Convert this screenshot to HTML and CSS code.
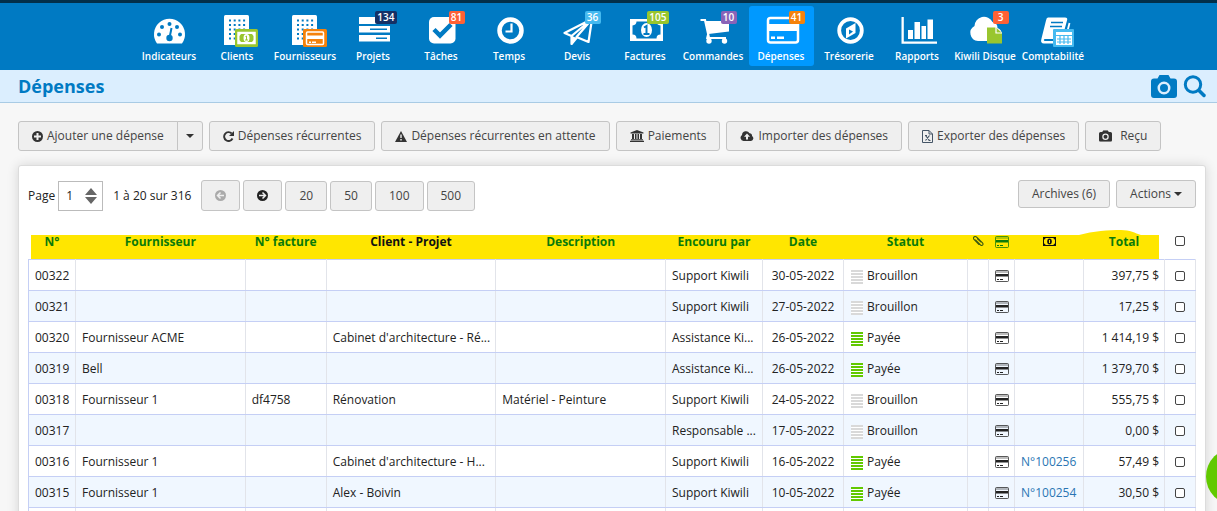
FILE: index.html
```html
<!DOCTYPE html>
<html lang="fr">
<head>
<meta charset="utf-8">
<title>Dépenses</title>
<link rel="stylesheet" href="styles.css">
</head>
<body>
<svg class="defs" aria-hidden="true">
  <symbol id="building" viewBox="0 0 40 34">
    <path fill="#fff" d="M8.500 1h22a1.500 1.500 0 0 1 1.500 1.500V31H7V2.500A1.500 1.500 0 0 1 8.500 1z"/>
    <path stroke="#007ac3" stroke-width="2" stroke-dasharray="2 2.700" fill="none" d="M12 6.500h17M12 11h17M12 15.500h17M12 20h17M12 24.500h17"/>
  </symbol>
  <symbol id="card" viewBox="0 0 14 12">
    <rect x=".5" y=".5" width="13" height="11" rx="1" fill="none" stroke="currentColor" opacity=".75"/>
    <path fill="currentColor" opacity=".3" d="M1 1h12v2H1z"/>
    <path fill="currentColor" d="M1 4h12v2.500H1zM2 9h2v1H2zM5 9h3v1H5z"/>
  </symbol>
  <symbol id="camera" viewBox="0 0 26 23">
    <path fill="currentColor" fill-rule="evenodd" d="M8.500 0h9l2 3.500H23a3 3 0 0 1 3 3V20a3 3 0 0 1-3 3H3a3 3 0 0 1-3-3V6.500a3 3 0 0 1 3-3h3.500zM13 6.500a6.500 6.500 0 1 0 0 13 6.500 6.500 0 0 0 0-13zm0 2.500a4 4 0 1 1 0 8 4 4 0 0 1 0-8z"/>
  </symbol>
</svg>

<nav class="nav">
  <a class="nav-item" href="#"><svg class="nav-icon" viewBox="0 0 40 34"><path fill="#fff" d="M8 29.500A15.500 15.500 0 1 1 33 29.500z"/><g fill="#007ac3"><circle cx="10" cy="20.500" r="2"/><circle cx="13" cy="13" r="2"/><circle cx="20.500" cy="10" r="2"/><circle cx="28" cy="13" r="2"/><circle cx="31" cy="20.500" r="2"/><circle cx="20.500" cy="24" r="3.200"/></g><path stroke="#007ac3" stroke-width="2" d="M20.500 24l2-10"/></svg><span>Indicateurs</span></a>
  <a class="nav-item" href="#"><svg class="nav-icon" viewBox="0 0 40 34"><use href="#building" width="40" height="34"/><rect x="18" y="15" width="23" height="18" rx="1.500" fill="#99c62e"/><path fill="none" stroke="#fff" stroke-width="1.500" d="M21 18.500h17v11H21z"/><path fill="#fff" fill-rule="evenodd" d="M21 18.500h17v11H21zm3 1.500l-1.500 2v4l1.500 2h11l1.500-2v-4l-1.500-2z"/><ellipse cx="29.500" cy="24" rx="3" ry="4" fill="#fff"/><path stroke="#99c62e" d="M28.500 22.500l1-.5v4m-1.500 0h3" fill="none"/></svg><span>Clients</span></a>
  <a class="nav-item" href="#"><svg class="nav-icon" viewBox="0 0 40 34"><use href="#building" width="40" height="34"/><rect x="18" y="15" width="24" height="18" rx="1.500" fill="#f5820b"/><rect x="21.500" y="18" width="17" height="12.500" rx="1" fill="none" stroke="#fff" stroke-width="1.500"/><path fill="#fff" d="M22 21.500h16V25H22zM24 27.500h2V29h-2zM27 27.500h4V29h-4z"/></svg><span>Fournisseurs</span></a>
  <a class="nav-item" href="#"><svg class="nav-icon" viewBox="0 0 40 34"><path fill="#fff" d="M6 3h31v7H6zM6 12h31v6.500H6zM6 21h31v6.500H6z"/><path stroke="#007ac3" stroke-width="1.500" d="M17 15.300h17M23 24.200h11"/></svg><b class="badge navy">134</b><span>Projets</span></a>
  <a class="nav-item" href="#"><svg class="nav-icon" viewBox="0 0 40 34"><rect x="8" y="3" width="26.500" height="26.500" rx="5" fill="#fff"/><path fill="none" stroke="#007ac3" stroke-width="4.500" d="M13 15.500l6 6L30 10.500"/></svg><b class="badge red">81</b><span>Tâches</span></a>
  <a class="nav-item" href="#"><svg class="nav-icon" viewBox="0 0 40 34"><circle cx="21.500" cy="16.500" r="11" fill="none" stroke="#fff" stroke-width="4.500"/><path fill="none" stroke="#fff" stroke-width="2.200" d="M22.500 9.500v8h-6"/></svg><span>Temps</span></a>
  <a class="nav-item" href="#"><svg class="nav-icon" viewBox="0 0 40 34"><path fill="none" stroke="#fff" stroke-width="2.200" stroke-linejoin="round" d="M35 5L7.500 19l7 3zM35 5L14.500 22v8l5-6M35 5l-3.500 23-12-5z"/><path fill="#fff" d="M14 21.500l5.500 2.500-4.500 7z"/></svg><b class="badge sky">36</b><span>Devis</span></a>
  <a class="nav-item" href="#"><svg class="nav-icon" viewBox="0 0 40 34"><path fill="#fff" fill-rule="evenodd" d="M5 5h33v22H5zm6.500 2.500q0 3.500-4 4v9q4 0 4 4h20q0-4 4-4v-9q-4-.5-4-4z"/><ellipse cx="21.500" cy="16" rx="5.500" ry="7" fill="#fff"/><path fill="none" stroke="#007ac3" stroke-width="2" d="M19 13.500l2.500-1.500v8M18.500 20h6"/></svg><b class="badge lime">105</b><span>Factures</span></a>
  <a class="nav-item" href="#"><svg class="nav-icon" viewBox="0 0 40 34"><path fill="#fff" d="M12 7h24v10.500L15.500 20z"/><path fill="none" stroke="#fff" stroke-width="2.200" d="M7.500 6h4.500l4 18h17M15 21l-1 4"/><circle cx="16" cy="27" r="2.700" fill="#fff"/><circle cx="31.500" cy="27" r="2.700" fill="#fff"/></svg><b class="badge purple">10</b><span>Commandes</span></a>
  <a class="nav-item active" href="#" aria-current="page"><svg class="nav-icon" viewBox="0 0 40 34"><rect x="7" y="4" width="30" height="24.500" rx="2.500" fill="none" stroke="#fff" stroke-width="2.500"/><path fill="#fff" d="M7 10h30v7H7zM10 22.500h4V25h-4zM16 22.500h7V25h-7z"/></svg><b class="badge orange">41</b><span>Dépenses</span></a>
  <a class="nav-item" href="#"><svg class="nav-icon" viewBox="0 0 40 34"><circle cx="21.500" cy="16.500" r="11.300" fill="none" stroke="#fff" stroke-width="3.800"/><path fill="#fff" fill-rule="evenodd" d="M26.500 9v10l-9.500 5.500V14.500zM20 15.500v5l4-3z"/></svg><span>Trésorerie</span></a>
  <a class="nav-item" href="#"><svg class="nav-icon" viewBox="0 0 40 34"><path fill="#fff" d="M4.500 3h2.300v24.500H40v2.300H4.500zM11 16h5v9h-5zM17.500 8H23v17h-5.500zM24.500 12H29v13h-4.500zM30.500 5.500H36V25h-5.500z"/></svg><span>Rapports</span></a>
  <a class="nav-item" href="#"><svg class="nav-icon" viewBox="0 0 40 34"><path fill="#fff" d="M13 27a8 8 0 0 1-3.500-15A9.500 9.500 0 0 1 27.500 8a6 6 0 0 1 5 6 7 7 0 0 1 0 13z"/><path fill="#99c62e" d="M22 13.500h9l6 5.500v10.500H22z"/><path fill="none" stroke="#fff" stroke-width="1.200" d="M31 13v6h6"/></svg><b class="badge red">3</b><span>Kiwili Disque</span></a>
  <a class="nav-item" href="#"><svg class="nav-icon" viewBox="0 0 40 34"><path fill="#fff" d="M15 3.500h17q3 0 2 3L29 25H11.500q-1.500 1 0 2H21v2.500H11q-4 0-2.500-5l4.500-18q.5-3 2-3z"/><path fill="none" stroke="#fff" stroke-width="1.800" d="M36.500 9l-3 12"/><path stroke="#007ac3" stroke-width="1.500" d="M18 8.500h12M17 12.500h12"/><rect x="20" y="15" width="21" height="18" rx="1" fill="#45baf0"/><path fill="#fff" d="M23 18h16v13H23z"/><path stroke="#45baf0" stroke-width="1.200" d="M23 21.500h16M24 25h14M24 28h14M27 22v8M31 22v8M35 22v8"/></svg><span>Comptabilité</span></a>
</nav>

<header class="titlebar">
  <h1>Dépenses</h1>
  <div class="title-actions">
    <button class="bare" aria-label="Reçu"><svg width="26" height="23"><use href="#camera"/></svg></button>
    <button class="bare" aria-label="Rechercher"><svg width="24" height="23" viewBox="0 0 24 23"><circle cx="10" cy="9.500" r="7.700" fill="none" stroke="currentColor" stroke-width="3"/><path stroke="currentColor" stroke-width="3.500" stroke-linecap="round" d="M16 15.500l5 5"/></svg></button>
  </div>
</header>

<div class="toolbar">
  <div class="split">
    <button class="btn"><svg width="11" height="11" viewBox="0 0 11 11"><circle cx="5.500" cy="5.500" r="5.500" fill="#333"/><path stroke="#efefef" stroke-width="2" d="M2 5.500h7M5.500 2v7"/></svg>Ajouter une dépense</button>
    <button class="btn toggle" aria-label="Plus d'options"><svg width="8" height="4" viewBox="0 0 8 4"><path fill="#333" d="M0 0h8L4 4z"/></svg></button>
  </div>
  <button class="btn"><svg width="11" height="11" viewBox="0 0 11 11"><path fill="none" stroke="#333" stroke-width="1.900" d="M9.500 7.500A4.400 4.400 0 1 1 8.700 2.500"/><path fill="#333" d="M11 0v5H6z"/></svg>Dépenses récurrentes</button>
  <button class="btn"><svg width="12" height="11" viewBox="0 0 12 11"><path fill="#333" d="M6 0l6 11H0z"/><path stroke="#efefef" stroke-width="1.400" d="M6 3.500v3.500M6 8v1.500"/></svg>Dépenses récurrentes en attente</button>
  <button class="btn"><svg width="14" height="12" viewBox="0 0 14 12"><path fill="#333" d="M7 0l6.500 2.500v1H.5v-1zM2 4h2v5H2zM5 4h1.500v5H5zM7.500 4H9v5H7.500zM10 4h2v5h-2zM1 9.300h12v.9H1zM0 10.800h14V12H0z"/></svg>Paiements</button>
  <button class="btn"><svg width="14" height="10" viewBox="0 0 14 10"><path fill="#333" d="M3.500 10A3.300 3.300 0 0 1 2 4 4 4 0 0 1 9.500 2.300 2.300 2.300 0 0 1 12 5a2.700 2.700 0 0 1-1 5z"/><path fill="#efefef" d="M7 2.500l3 3.200H8v2.800H6V5.700H4z"/></svg>Importer des dépenses</button>
  <button class="btn"><svg width="11" height="13" viewBox="0 0 11 13"><path fill="none" stroke="#456" d="M.5.500h6.500l3.500 3.500v8.500H.5zM7 .5V4h3.500"/><path stroke="#456" stroke-width="1.200" d="M3.500 5.500l4 5M7.500 5.500l-4 5M3 5.500h2M6.500 10.500h2"/></svg>Exporter des dépenses</button>
  <button class="btn wide"><svg width="13" height="12" viewBox="0 0 26 23"><use href="#camera"/></svg>Reçu</button>
</div>

<main class="panel">
  <div class="pager">
    <label for="page">Page</label>
    <div class="page-box"><input id="page" type="text" value="1"><svg width="12" height="16" viewBox="0 0 12 16"><path fill="#666" d="M6 0l6 7H0zM6 16l6-7H0z"/></svg></div>
    <span class="range">1 à 20 sur 316</span>
    <button class="btn arrow" disabled aria-label="Page précédente"><svg width="11" height="11" viewBox="0 0 11 11"><circle cx="5.500" cy="5.500" r="5.500" fill="#aaa"/><path fill="none" stroke="#efefef" stroke-width="1.500" d="M9 5.500H3M5.500 2.500l-3 3 3 3"/></svg></button>
    <button class="btn arrow" aria-label="Page suivante"><svg width="11" height="11" viewBox="0 0 11 11"><circle cx="5.500" cy="5.500" r="5.500" fill="#222"/><path fill="none" stroke="#efefef" stroke-width="1.500" d="M2 5.500h6M5.500 2.500l3 3-3 3"/></svg></button>
    <button class="btn">20</button>
    <button class="btn">50</button>
    <button class="btn">100</button>
    <button class="btn">500</button>
    <div class="right">
      <button class="btn">Archives (6)</button>
      <button class="btn menu">Actions<svg width="8" height="4" viewBox="0 0 8 4"><path fill="#333" d="M0 0h8L4 4z"/></svg></button>
    </div>
  </div>

  <div class="table-wrap">
    <div class="marker"><svg width="62" height="5" viewBox="0 0 62 5"><path fill="#ffe600" d="M0 5C14 1 30 0 42 0c9 0 14 3 20 5z"/></svg></div>
    <table>
      <colgroup><col class="c-num"><col><col class="c-fac"><col><col><col class="c-par"><col class="c-date"><col class="c-stat"><col class="c-clip"><col class="c-card"><col class="c-bill"><col class="c-total"><col class="c-check"></colgroup>
      <thead>
        <tr>
          <th>N°</th><th>Fournisseur</th><th>N° facture</th><th class="plain">Client - Projet</th><th>Description</th><th>Encouru par</th><th>Date</th><th>Statut</th>
          <th><svg width="11" height="11" viewBox="0 0 11 11"><path fill="none" stroke="#3b5a10" stroke-width="1.100" stroke-linecap="round" d="M2.500 4l5 5q1.500 1 2.200 0t-.2-2.200L3.500 1Q2 0 1 1t0 2.500L6 8.500M8 6L4.500 2.800"/></svg></th>
          <th><svg width="14" height="12"><use href="#card"/></svg></th>
          <th class="plain"><svg class="bill" width="13" height="9" viewBox="0 0 13 9"><path fill="#111" fill-rule="evenodd" d="M0 0h13v9H0zm2.500 1Q2.500 2.500 1 2.500v4q1.500 0 1.500 1.500h8q0-1.500 1.500-1.500v-4Q10.500 2.500 10.500 1z"/><ellipse cx="6.500" cy="4.500" rx="2.300" ry="3" fill="#111"/><path stroke="#ffe600" d="M6.500 3v3"/></svg></th>
          <th>Total</th><th><input type="checkbox" aria-label="Tout sélectionner"></th>
        </tr>
      </thead>
      <tbody>
        <tr><td>00322</td><td></td><td></td><td></td><td></td><td>Support Kiwili</td><td class="mid">30-05-2022</td><td class="stat"><i class="bars"></i>Brouillon</td><td></td><td class="ic"><svg width="14" height="12"><use href="#card"/></svg></td><td></td><td class="num">397,75 $</td><td class="ic"><input type="checkbox" aria-label="00322"></td></tr>
        <tr><td>00321</td><td></td><td></td><td></td><td></td><td>Support Kiwili</td><td class="mid">27-05-2022</td><td class="stat"><i class="bars"></i>Brouillon</td><td></td><td class="ic"><svg width="14" height="12"><use href="#card"/></svg></td><td></td><td class="num">17,25 $</td><td class="ic"><input type="checkbox" aria-label="00321"></td></tr>
        <tr><td>00320</td><td>Fournisseur ACME</td><td></td><td>Cabinet d'architecture - Ré...</td><td></td><td>Assistance Ki...</td><td class="mid">26-05-2022</td><td class="stat"><i class="bars paid"></i>Payée</td><td></td><td class="ic"><svg width="14" height="12"><use href="#card"/></svg></td><td></td><td class="num">1 414,19 $</td><td class="ic"><input type="checkbox" aria-label="00320"></td></tr>
        <tr><td>00319</td><td>Bell</td><td></td><td></td><td></td><td>Assistance Ki...</td><td class="mid">26-05-2022</td><td class="stat"><i class="bars paid"></i>Payée</td><td></td><td class="ic"><svg width="14" height="12"><use href="#card"/></svg></td><td></td><td class="num">1 379,70 $</td><td class="ic"><input type="checkbox" aria-label="00319"></td></tr>
        <tr><td>00318</td><td>Fournisseur 1</td><td>df4758</td><td>Rénovation</td><td>Matériel - Peinture</td><td>Support Kiwili</td><td class="mid">24-05-2022</td><td class="stat"><i class="bars"></i>Brouillon</td><td></td><td class="ic"><svg width="14" height="12"><use href="#card"/></svg></td><td></td><td class="num">555,75 $</td><td class="ic"><input type="checkbox" aria-label="00318"></td></tr>
        <tr><td>00317</td><td></td><td></td><td></td><td></td><td>Responsable ...</td><td class="mid">17-05-2022</td><td class="stat"><i class="bars"></i>Brouillon</td><td></td><td class="ic"><svg width="14" height="12"><use href="#card"/></svg></td><td></td><td class="num">0,00 $</td><td class="ic"><input type="checkbox" aria-label="00317"></td></tr>
        <tr><td>00316</td><td>Fournisseur 1</td><td></td><td>Cabinet d'architecture - H...</td><td></td><td>Support Kiwili</td><td class="mid">16-05-2022</td><td class="stat"><i class="bars paid"></i>Payée</td><td></td><td class="ic"><svg width="14" height="12"><use href="#card"/></svg></td><td><a href="#">N°100256</a></td><td class="num">57,49 $</td><td class="ic"><input type="checkbox" aria-label="00316"></td></tr>
        <tr><td>00315</td><td>Fournisseur 1</td><td></td><td>Alex - Boivin</td><td></td><td>Support Kiwili</td><td class="mid">10-05-2022</td><td class="stat"><i class="bars paid"></i>Payée</td><td></td><td class="ic"><svg width="14" height="12"><use href="#card"/></svg></td><td><a href="#">N°100254</a></td><td class="num">30,50 $</td><td class="ic"><input type="checkbox" aria-label="00315"></td></tr>
        <tr><td></td><td></td><td></td><td></td><td></td><td></td><td></td><td></td><td></td><td></td><td></td><td></td><td></td></tr>
      </tbody>
    </table>
  </div>
</main>
<button class="chat" aria-label="Aide"></button>
</body>
</html>
```

FILE: styles.css
```css
* { box-sizing: border-box; }
html, body { height: 100%; }
body {
  margin: 0;
  overflow: hidden;
  background: #f7f7f7;
  color: #222;
  font: 12px/18px "Open Sans", "Noto Sans", sans-serif;
}
button, input { font: inherit; color: inherit; margin: 0; }
a { text-decoration: none; color: #2a75b3; }
.defs { position: absolute; width: 0; height: 0; }

.nav {
  display: flex;
  justify-content: center;
  gap: 3px;
  height: 70px;
  padding: 3px 0 4px 5px;
  border-top: 3px solid #022f4a;
  background: #007ac3;
}
.nav-item {
  position: relative;
  display: flex;
  flex-direction: column;
  align-items: center;
  flex: none;
  width: 65px;
  height: 60px;
  padding-top: 8px;
  border-radius: 3px;
  color: #fff;
  font-size: 10px;
  font-weight: 600;
  line-height: 16px;
  white-space: nowrap;
}
.nav-item.active { background: #0099ff; }
.nav-icon { width: 40px; height: 34px; flex: none; overflow: visible; }
.badge {
  position: absolute;
  top: 5px;
  right: 9px;
  padding: 0 2px;
  min-width: 16px;
  border-radius: 2px;
  font-size: 10px;
  font-weight: 600;
  line-height: 13px;
  text-align: center;
}
.navy { background: #143066; }
.red { background: #ff6135; }
.sky { background: #45baf0; }
.lime { background: #99c62e; }
.purple { background: #8a63b8; }
.orange { background: #f5820b; }

.titlebar {
  display: flex;
  align-items: center;
  justify-content: space-between;
  height: 33px;
  padding: 0 10px 0 18px;
  border-bottom: 1px solid #a9cbe4;
  background: #dbeefe;
  color: #007ac3;
}
.titlebar h1 { margin: 0; font-size: 18px; line-height: 24px; }
.title-actions { display: flex; gap: 6px; }
.bare { display: flex; padding: 0; border: 0; background: none; }

.toolbar { display: flex; gap: 6px; padding: 18px 18px 14px; }
.btn {
  display: flex;
  align-items: center;
  justify-content: center;
  gap: 4px;
  height: 30px;
  padding: 0 13px;
  border: 1px solid #c4c4c4;
  border-radius: 3px;
  background: #efefef;
  color: #444;
  white-space: nowrap;
}
.btn svg { color: #333; flex: none; }
.btn.wide { gap: 8px; }
.split { display: flex; }
.split .btn:first-child { border-radius: 3px 0 0 3px; }
.btn.toggle { width: 26px; padding: 0; margin-left: -1px; border-radius: 0 3px 3px 0; }

.panel {
  margin: 0 11px 0 18px;
  padding: 14px 9px;
  border: 1px solid #dcdcdc;
  border-radius: 3px;
  background: #fff;
  box-shadow: 0 0 12px rgba(0, 0, 0, 0.14);
}
.pager { display: flex; align-items: center; gap: 3px; height: 31px; }
.page-box { position: relative; width: 45px; }
.page-box input { display: block; width: 100%; height: 30px; padding: 0 7px; border: 1px solid #bbb; background: #fff; }
.page-box svg { position: absolute; right: 6px; top: 7px; }
.range { margin: 0 7px; }
.btn.arrow { width: 39px; height: 31px; padding: 0; }
.right { display: flex; gap: 6px; margin-left: auto; align-self: flex-start; }
.right .btn { height: 28px; }
.btn.menu { gap: 3px; }

.table-wrap { position: relative; margin-top: 24px; }
.marker { position: absolute; top: 0; left: 3px; right: 37px; height: 24px; background: #ffe600; }
.marker svg { position: absolute; right: 18px; bottom: 100%; }
table { position: relative; width: 100%; table-layout: fixed; border-collapse: collapse; }
.c-num { width: 47px; }
.c-fac { width: 81px; }
.c-par { width: 97px; }
.c-date { width: 81px; }
.c-stat { width: 124px; }
.c-clip { width: 21px; }
.c-card { width: 26px; }
.c-bill { width: 69px; }
.c-total { width: 81px; }
.c-check { width: 31px; }
th { height: 24px; padding: 0 0 10px; color: #0a7a0a; font-weight: 700; line-height: 14px; vertical-align: top; white-space: nowrap; }
th.plain { color: #111; }
th svg, th input { display: block; margin: 1px auto 0; }
th .bill { margin-top: 2px; }
td {
  height: 31px;
  padding: 1px 2px 0 6px;
  border: 1px solid #e2e4ea;
  border-top-color: #c5cff5;
  border-bottom-color: #c5cff5;
  overflow: hidden;
  text-overflow: ellipsis;
  white-space: nowrap;
}
td:first-child { border-left-color: #c5cff5; }
tbody tr:nth-child(even) { background: #f0f7ff; }
td.num { padding-right: 5px; text-align: right; }
td.mid { padding: 1px 0 0; text-align: center; }
td.stat { padding-left: 7px; }
td.ic { padding: 1px 0 0; }
.ic svg, .ic input { display: block; margin: 0 auto; }
input[type="checkbox"] { appearance: none; width: 10px; height: 10px; border: 1px solid #444; border-radius: 2px; background: #fff; }
input[type="checkbox"]:checked { background: #444; }
.bars {
  display: inline-block;
  width: 12px;
  height: 14px;
  margin-right: 4px;
  vertical-align: text-bottom;
  background: repeating-linear-gradient(#d9d9d9 0 2px, #fff 2px 3px);
}
.bars.paid { background: repeating-linear-gradient(#62c900 0 2px, #fff 2px 3px); }

.chat {
  position: fixed;
  right: -46px;
  bottom: 6px;
  width: 57px;
  height: 57px;
  border: 0;
  border-radius: 50%;
  background: #62c900;
}
```
